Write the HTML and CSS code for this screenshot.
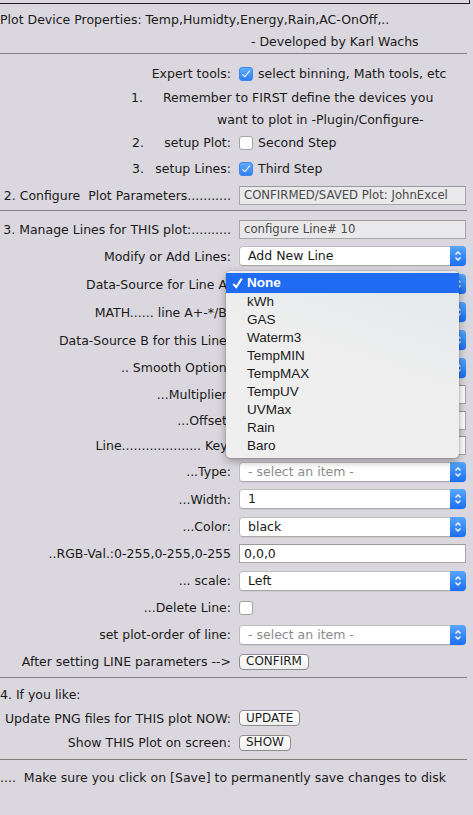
FILE: index.html
```html
<!DOCTYPE html>
<html lang="en">
<head>
    <meta charset="UTF-8">
    <meta name="viewport" content="width=device-width, initial-scale=1.0">
    <title>Plot Device Properties</title>
    <link rel="stylesheet" href="styles.css">
</head>
<body>
    <div class="topbar"></div>

    <header class="title-block">
        <div class="title">Plot Device Properties: Temp,Humidty,Energy,Rain,AC-OnOff,..</div>
        <div class="credit">- Developed by Karl Wachs</div>
    </header>

    <section class="group group-steps">
        <div class="row row-short">
            <span class="lbl">Expert tools:</span>
            <span class="ctl"><span class="check on"></span>select binning, Math tools, etc</span>
        </div>
        <div class="note row-s"><span class="num">1.</span>Remember to FIRST define the devices you</div>
        <div class="note note-cont row-s">want to plot in -Plugin/Configure-</div>
        <div class="row row-short">
            <span class="lbl lbl-num"><span class="num">2.</span>setup Plot:</span>
            <span class="ctl"><span class="check"></span>Second Step</span>
        </div>
        <div class="row">
            <span class="lbl lbl-num"><span class="num">3.</span>setup Lines:</span>
            <span class="ctl"><span class="check on"></span>Third Step</span>
        </div>
        <div class="row">
            <span class="lbl">2. Configure&nbsp; Plot Parameters...........</span>
            <span class="field field-off">CONFIRMED/SAVED Plot: JohnExcel</span>
        </div>
    </section>

    <section class="group group-lines">
        <div class="row row-short">
            <span class="lbl">3. Manage Lines for THIS plot:..........</span>
            <span class="field field-off">configure Line# 10</span>
        </div>
        <div class="row row-tall">
            <span class="lbl">Modify or Add Lines:</span>
            <div class="select"><span class="value">Add New Line</span><span class="stepper"><svg viewBox="0 0 10 16"><path d="M2.5 6.5 5 4 7.5 6.5M2.5 9.5 5 12 7.5 9.5"/></svg></span></div>
        </div>
        <!-- the next rows sit under the open menu -->
        <div class="row row-tall">
            <span class="lbl">Data-Source for Line A:</span>
            <div class="select"><span class="value"></span><span class="stepper"><svg viewBox="0 0 10 16"><path d="M2.5 6.5 5 4 7.5 6.5M2.5 9.5 5 12 7.5 9.5"/></svg></span></div>
        </div>
        <div class="row row-tall">
            <span class="lbl">MATH...... line A+-*/B:</span>
            <div class="select"><span class="value"></span><span class="stepper"><svg viewBox="0 0 10 16"><path d="M2.5 6.5 5 4 7.5 6.5M2.5 9.5 5 12 7.5 9.5"/></svg></span></div>
        </div>
        <div class="row row-tall">
            <span class="lbl">Data-Source B for this Line:</span>
            <div class="select"><span class="value"></span><span class="stepper"><svg viewBox="0 0 10 16"><path d="M2.5 6.5 5 4 7.5 6.5M2.5 9.5 5 12 7.5 9.5"/></svg></span></div>
        </div>
        <div class="row">
            <span class="lbl">.. Smooth Option:</span>
            <div class="select"><span class="value"></span><span class="stepper"><svg viewBox="0 0 10 16"><path d="M2.5 6.5 5 4 7.5 6.5M2.5 9.5 5 12 7.5 9.5"/></svg></span></div>
        </div>
        <div class="row">
            <span class="lbl">...Multiplier:</span>
            <span class="field"></span>
        </div>
        <div class="row row-short">
            <span class="lbl">...Offset:</span>
            <span class="field"></span>
        </div>
        <div class="row row-short">
            <span class="lbl">Line.................... Key:</span>
            <span class="field"></span>
        </div>
        <div class="row">
            <span class="lbl">...Type:</span>
            <div class="select"><span class="value placeholder">- select an item -</span><span class="stepper"><svg viewBox="0 0 10 16"><path d="M2.5 6.5 5 4 7.5 6.5M2.5 9.5 5 12 7.5 9.5"/></svg></span></div>
        </div>
        <div class="row row-tall">
            <span class="lbl">...Width:</span>
            <div class="select"><span class="value">1</span><span class="stepper"><svg viewBox="0 0 10 16"><path d="M2.5 6.5 5 4 7.5 6.5M2.5 9.5 5 12 7.5 9.5"/></svg></span></div>
        </div>
        <div class="row">
            <span class="lbl">...Color:</span>
            <div class="select"><span class="value">black</span><span class="stepper"><svg viewBox="0 0 10 16"><path d="M2.5 6.5 5 4 7.5 6.5M2.5 9.5 5 12 7.5 9.5"/></svg></span></div>
        </div>
        <div class="row">
            <span class="lbl">..RGB-Val.:0-255,0-255,0-255</span>
            <span class="field">0,0,0</span>
        </div>
        <div class="row">
            <span class="lbl">... scale:</span>
            <div class="select"><span class="value">Left</span><span class="stepper"><svg viewBox="0 0 10 16"><path d="M2.5 6.5 5 4 7.5 6.5M2.5 9.5 5 12 7.5 9.5"/></svg></span></div>
        </div>
        <div class="row">
            <span class="lbl">...Delete Line:</span>
            <span class="ctl"><span class="check"></span></span>
        </div>
        <div class="row">
            <span class="lbl">set plot-order of line:</span>
            <div class="select"><span class="value placeholder">- select an item -</span><span class="stepper"><svg viewBox="0 0 10 16"><path d="M2.5 6.5 5 4 7.5 6.5M2.5 9.5 5 12 7.5 9.5"/></svg></span></div>
        </div>
        <div class="row">
            <span class="lbl">After setting LINE parameters --&gt;</span>
            <span class="ctl"><button class="btn">CONFIRM</button></span>
        </div>
    </section>

    <section class="group group-extra">
        <div class="note-left row-short">4. If you like:</div>
        <div class="row row-s">
            <span class="lbl">Update PNG files for THIS plot NOW:</span>
            <span class="ctl"><button class="btn">UPDATE</button></span>
        </div>
        <div class="row">
            <span class="lbl">Show THIS Plot on screen:</span>
            <span class="ctl"><button class="btn">SHOW</button></span>
        </div>
    </section>

    <section class="group-footer">
        <div class="note-left row-short">....&nbsp; Make sure you click on [Save] to permanently save changes to disk</div>
    </section>

    <!-- open popup of the "Data-Source for Line A" menu -->
    <div class="menu">
        <div class="item sel"><svg class="tick" viewBox="0 0 11 12"><path d="M1.2 6.8 4.2 10.2 9.8 1.6"/></svg>None</div>
        <div class="item">kWh</div>
        <div class="item">GAS</div>
        <div class="item">Waterm3</div>
        <div class="item">TempMIN</div>
        <div class="item">TempMAX</div>
        <div class="item">TempUV</div>
        <div class="item">UVMax</div>
        <div class="item">Rain</div>
        <div class="item">Baro</div>
    </div>
</body>
</html>
```

FILE: styles.css
```css
body {
    margin: 0;
    width: 473px;
    height: 815px;
    overflow: hidden;
    position: relative;
    background: #dad7de;
    font-family: "DejaVu Sans", sans-serif;
    font-size: 12.5px;
    color: #1a1a1a;
}
.topbar {
    height: 3px;
    margin-right: 3px;
    border-bottom: 1px solid #1e1e1e;
    border-right: 1px solid #1e1e1e;
}
.title-block {
    width: 467px;
    padding-top: 5px;
    border-bottom: 1px solid #7f7f7f;
}
.title, .credit {
    height: 22px;
    line-height: 22px;
    white-space: nowrap;
}
.credit { padding-left: 251px; }

.group {
    width: 467px;
    border-bottom: 1px solid #7f7f7f;
}
.group-steps { padding: 7px 0 1px; }
.group-lines { padding: 6px 0 2px; }
.group-extra { padding: 4px 0 3px; }
.group-footer { padding-top: 5px; }

/* label column / control column */
.row {
    display: grid;
    grid-template-columns: 231px 227px;
    column-gap: 8px;
    align-items: center;
    height: 27px;
}
.row-tall { height: 28px; }
.row-short { height: 25px; }
.row-s { height: 22px; }

.lbl {
    text-align: right;
    white-space: nowrap;
}
.lbl-num {
    display: flex;
    justify-content: space-between;
    padding-left: 132px;
}
.ctl {
    display: flex;
    align-items: center;
    gap: 5px;
    white-space: nowrap;
}

.note {
    display: flex;
    align-items: center;
    padding-left: 131px;
    white-space: nowrap;
}
.note .num { width: 32px; }
.note-cont { padding-left: 217px; }
.note-left {
    display: flex;
    align-items: center;
    white-space: nowrap;
}

.check {
    width: 12px;
    height: 12px;
    border: 1px solid #a3a3a3;
    border-radius: 3px;
    background: #fff;
    flex: none;
}
.check.on {
    border-color: #3c86ee;
    background: linear-gradient(#62acfd, #2f7ff5);
    position: relative;
}
.check.on::after {
    content: "";
    position: absolute;
    left: 4px;
    top: 1px;
    width: 3px;
    height: 7px;
    border: solid #fff;
    border-width: 0 1.6px 1.6px 0;
    transform: rotate(40deg);
}

.field {
    display: block;
    height: 17px;
    line-height: 17px;
    padding-left: 4px;
    border: 1px solid #a7a7a7;
    border-top-color: #9a9a9a;
    background: #fff;
    white-space: nowrap;
    overflow: hidden;
}
.field-off {
    background: #e9e8ea;
    color: #4a4a4a;
    font-size: 11.7px;
}

.select {
    display: flex;
    height: 18px;
    border: 1px solid #bdbdbd;
    border-bottom-color: #aaa;
    border-radius: 4px;
    background: #fff;
    box-shadow: 0 1px 0 rgba(0,0,0,0.05);
}
.select .value {
    flex: 1;
    padding-left: 8px;
    line-height: 18px;
}
.select .placeholder { color: #8b8b8b; }
.stepper {
    width: 16px;
    margin: -1px -1px -1px 0;
    border-radius: 0 4px 4px 0;
    background: linear-gradient(#58a6fb, #1b6ef1);
    display: flex;
    align-items: center;
    justify-content: center;
}
.stepper svg {
    width: 10px;
    height: 16px;
    fill: none;
    stroke: #fff;
    stroke-width: 1.4;
}

.btn {
    font-family: inherit;
    font-size: 12px;
    color: #1c1c1c;
    height: 16px;
    line-height: 13px;
    padding: 0 6px;
    border: 1px solid #8d8d8d;
    border-radius: 4px;
    background: linear-gradient(#ffffff, #efefef);
}

.menu {
    position: absolute;
    left: 226px;
    top: 271px;
    width: 233px;
    padding: 2px 0 3px;
    border-radius: 5px;
    background: linear-gradient(200deg, #e2e8eb 0%, #eeeeee 45%, #efefef 100%);
    box-shadow: 0 3px 9px rgba(0,0,0,0.35), 0 0 0 1px rgba(0,0,0,0.07);
    font-family: "Liberation Sans", Arial, sans-serif;
    font-size: 13.5px;
    color: #1a1a1a;
}
.item {
    height: 18px;
    line-height: 18px;
    padding-left: 21px;
    position: relative;
}
.item.sel {
    height: 20px;
    line-height: 20px;
    background: #1f6cf2;
    color: #fff;
    font-weight: bold;
}
.tick {
    position: absolute;
    left: 6px;
    top: 4px;
    width: 11px;
    height: 12px;
    fill: none;
    stroke: #fff;
    stroke-width: 2;
}
```
